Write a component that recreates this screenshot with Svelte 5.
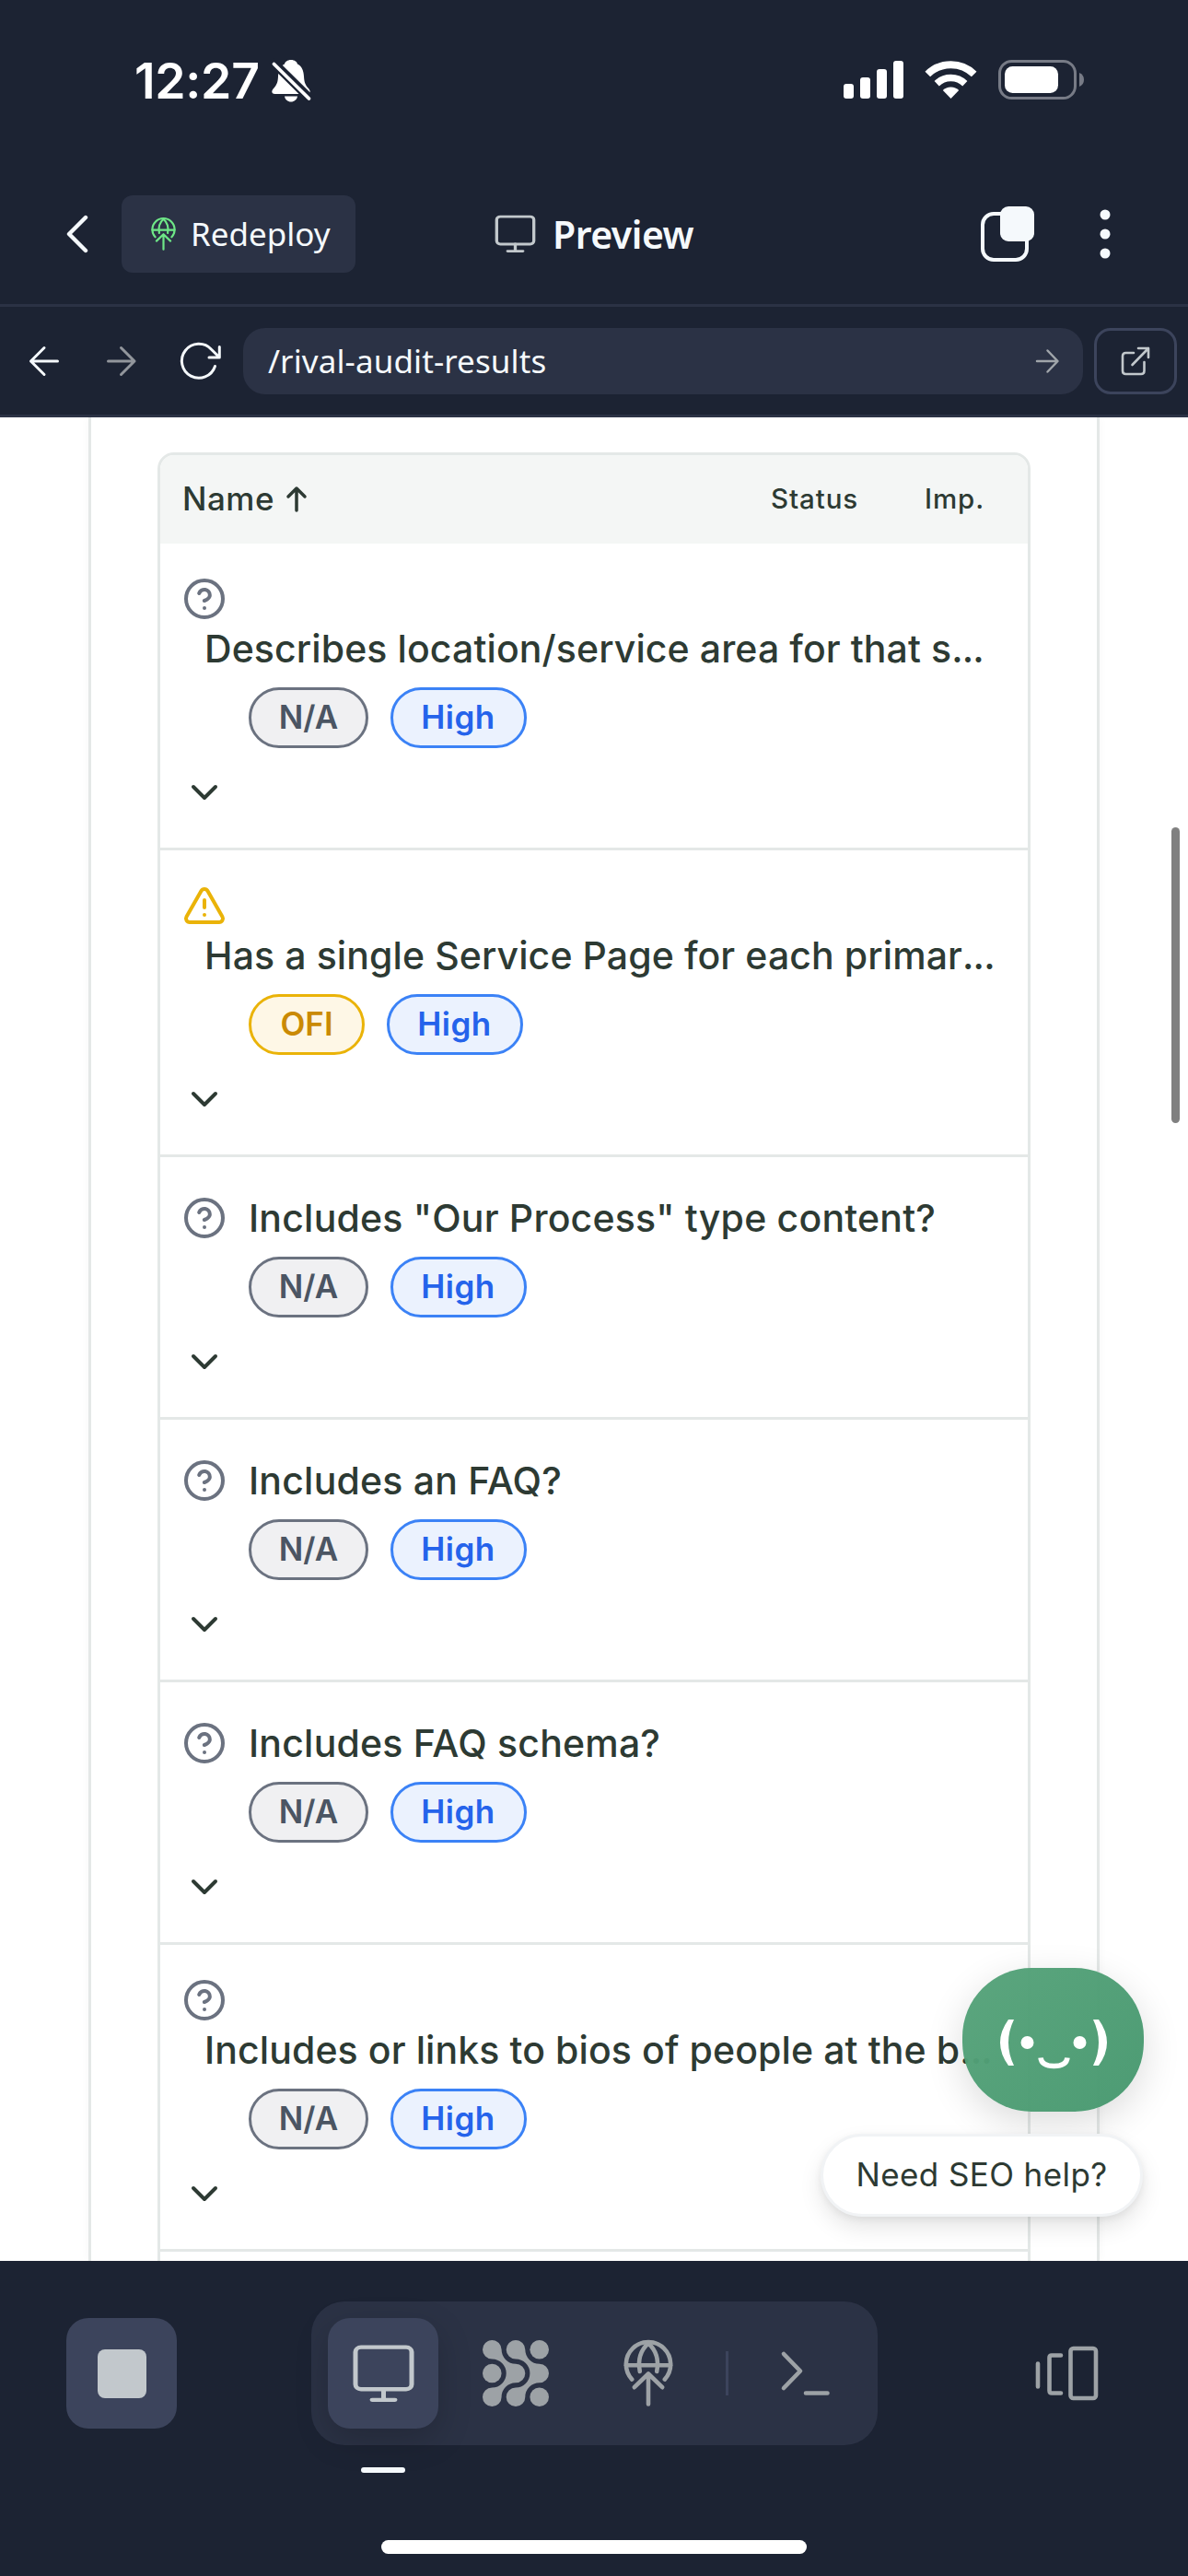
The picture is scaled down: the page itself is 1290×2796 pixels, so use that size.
<script>
  const rows = [
    { icon: 'help', tall: true, title: 'Describes location/service area for that s', cut: true, status: 'N/A' },
    { icon: 'warn', tall: true, title: 'Has a single Service Page for each primar', cut: true, status: 'OFI' },
    { icon: 'help', tall: false, title: 'Includes "Our Process" type content?', status: 'N/A' },
    { icon: 'help', tall: false, title: 'Includes an FAQ?', status: 'N/A' },
    { icon: 'help', tall: false, title: 'Includes FAQ schema?', status: 'N/A' },
    { icon: 'help', tall: true, title: 'Includes or links to bios of people at the b', cut: true, status: 'N/A' },
  ];
</script>

{#snippet globe()}
  <path d="M9.200 42.600A24.200 24.200 0 1 1 44.800 42.600" />
  <path d="M3 27.300H51" />
  <path d="M17.800 34C15.500 22 18.500 11 27 3.500C35.500 11 38.500 22 36.200 34" />
  <path d="M11.800 51.200L27 36.500L42.200 51.200M27 37V69.500" />
{/snippet}

{#snippet monitor()}
  <rect x="2" y="2" width="61" height="53" rx="6" />
  <path d="M32.500 55V68M20 68.500H45" />
{/snippet}

<div class="screen">
  <header class="status">
    <span class="time">12:27</span>
    <svg class="bell" width="43" height="46" viewBox="0 0 43 46">
      <path fill="#fff" d="M21 0c-4 0-6.500 2.200-7 4.500C9 7 7.300 12 7 18c-.2 6-1.500 9-4.500 12.500C-1 34 0 37 3.500 37H38.500C42 37 43 34 39.500 30.500 36.500 27 35.300 24 35 18c-.300-6-2-11-7-13.500C27.500 2.200 25 0 21 0zM14 39.500c.500 3.500 3.500 6 7 6s6.500-2.500 7-6z" />
      <path d="M2.500 3.500L41 41.500" stroke="#1c2333" stroke-width="9.500" />
      <path d="M2.500 4.500L40.500 42" stroke="#fff" stroke-width="3.800" stroke-linecap="round" />
    </svg>
    <svg class="signals" width="262" height="44" viewBox="0 0 262 44">
      <g fill="#fff">
        <rect x="0" y="26" width="11" height="16" rx="3" />
        <rect x="18" y="19" width="11" height="23" rx="3" />
        <rect x="36" y="10" width="11" height="32" rx="3" />
        <rect x="54" y="1" width="11" height="41" rx="3" />
        <path d="M116.500 29.500c-3.500 0-6.500 1.300-8.700 3.500l8.700 9 8.700-9c-2.200-2.200-5.200-3.500-8.700-3.500z" />
      </g>
      <path d="M91.300 15.500a36 36 0 0 1 50.400 0" fill="none" stroke="#fff" stroke-width="8" />
      <path d="M101.200 25.700a22 22 0 0 1 30.600 0" fill="none" stroke="#fff" stroke-width="7.500" />
      <rect x="169.500" y="1.500" width="82" height="40" rx="13" fill="none" stroke="#777b86" stroke-width="3" />
      <rect x="175" y="7" width="58" height="29" rx="8.500" fill="#fff" />
      <path d="M256 14q5 2 5 7.500t-5 7.500z" fill="#777b86" />
    </svg>
  </header>

  <div class="toolbar">
    <svg class="back" width="24" height="42" viewBox="0 0 24 42"><path d="M21 3L3 21L21 39" /></svg>
    <button class="redeploy">
      <svg class="green" width="27" height="36" viewBox="0 0 54 72">{@render globe()}</svg>
      <span>Redeploy</span>
    </button>
    <div class="title">
      <svg class="mon" width="43" height="40" viewBox="0 0 65 71" preserveAspectRatio="none">{@render monitor()}</svg>
      <span>Preview</span>
    </div>
    <svg class="copy" width="60" height="60" viewBox="0 0 60 60">
      <rect x="2" y="8" width="48" height="50" rx="12" fill="none" stroke="#f5f9fc" stroke-width="4" />
      <rect x="21" y="0" width="37" height="38" rx="9" fill="#f5f9fc" />
    </svg>
    <svg class="dots" width="12" height="54" viewBox="0 0 12 54" fill="#f5f9fc">
      <circle cx="6" cy="6" r="5.500" /><circle cx="6" cy="27" r="5.500" /><circle cx="6" cy="48" r="5.500" />
    </svg>
  </div>

  <nav class="address">
    <svg class="nb" width="32" height="32" viewBox="0 0 32 32"><path d="M16 1.500L1.500 16L16 30.500M1.500 16H30.500" /></svg>
    <svg class="nf" width="32" height="32" viewBox="0 0 32 32"><path d="M15.500 1.500L30 16L15.500 30.500M30 16H1.500" /></svg>
    <svg class="nr" width="46" height="42" viewBox="0 0 46 42"><path d="M37.500 26.500A18.500 18.500 0 1 1 33.500 8.200L42.300 17M42.300 5.500V17H31" /></svg>
    <div class="url">
      <span>/rival-audit-results</span>
      <svg width="25" height="26" viewBox="0 0 25 26"><path d="M12.500 1.500L23.500 13L12.500 24.500M23 13H1" /></svg>
    </div>
    <button class="open">
      <svg width="32" height="32" viewBox="0 0 32 32"><path d="M14 7H5.500Q2 7 2 10.500V26.500Q2 30 5.500 30H22Q25.500 30 25.500 26.500V17M19 2H30V12M30 2L12.500 20" /></svg>
    </button>
  </nav>

  <main>
    <section class="card">
      <div class="table">
        <div class="thead">
          <span class="name">Name</span>
          <svg width="22" height="27" viewBox="0 0 22 27"><path d="M11 26V2.500M2 11L11 2L20 11" /></svg>
          <span class="th st">Status</span>
          <span class="th imp">Imp.</span>
        </div>
        {#each rows as row}
          <article class="row">
            <div class="head" class:tall={row.tall}>
              {#if row.icon === 'help'}
                <svg class="ico help" viewBox="0 0 24 24"><circle cx="12" cy="12" r="10" /><path d="M9.090 9a3 3 0 0 1 5.830 1c0 2-3 3-3 3M12 17h.01" /></svg>
              {:else}
                <svg class="ico warn" viewBox="0 0 24 24"><path d="m21.730 18-8-14a2 2 0 0 0-3.480 0l-8 14A2 2 0 0 0 4 21h16a2 2 0 0 0 1.730-3M12 9v4M12 17h.01" /></svg>
              {/if}
              <h3>{row.title}{#if row.cut}<span class="cut">...</span>{/if}</h3>
            </div>
            <div class="pills">
              <span class="pill" class:ofi={row.status === 'OFI'}>{row.status}</span>
              <span class="pill high">High</span>
            </div>
            <svg class="ico chev" viewBox="0 0 24 24"><path d="m6 9 6 6 6-6" /></svg>
          </article>
        {/each}
      </div>
    </section>
    <div class="scrollbar"></div>
    <div class="chat">
      <svg width="118" height="54" viewBox="0 0 118 54">
        <g fill="#fff">
          <path d="M10 0H16Q4 25 16 50H10Q-8 25 10 0z" />
          <path d="M108 0H102Q114 25 102 50H108Q126 25 108 0z" />
          <circle cx="30.500" cy="25" r="7" /><circle cx="87.500" cy="25" r="7" />
        </g>
        <path class="smile" d="M45 41.500Q46 50.500 59.500 50.500T74 41.500" fill="none" stroke="#fff" stroke-width="5.500" />
      </svg>
    </div>
    <div class="helpbox">Need SEO help?</div>
  </main>

  <footer>
    <button class="stop"><i></i></button>
    <div class="group">
      <div class="tab active"><svg class="mon" width="65" height="61" viewBox="0 0 65 71" preserveAspectRatio="none">{@render monitor()}</svg></div>
      <div class="tab">
        <svg width="72" height="72" viewBox="0 0 72 72" fill="#9da2a6">
          <circle cx="10.300" cy="36" r="10.300" /><circle cx="61.700" cy="10.300" r="10.300" /><circle cx="61.700" cy="61.700" r="10.300" />
          {#each [0, 25.7] as dx}
            <path transform="translate({dx} 0)" d="M10.300 20.600A10.300 10.300 0 1 1 20.600 10.300A15.400 15.400 0 0 0 36 25.700A10.300 10.300 0 0 1 36 46.300A15.400 15.400 0 0 0 20.600 61.700A10.300 10.300 0 1 1 10.300 51.400A15.400 15.400 0 0 0 25.700 36A15.400 15.400 0 0 0 10.300 20.600z" />
          {/each}
        </svg>
      </div>
      <div class="tab"><svg class="gray" width="54" height="72" viewBox="0 0 54 72">{@render globe()}</svg></div>
      <div class="sep"></div>
      <div class="tab"><svg class="gray" width="54" height="48" viewBox="0 0 54 48"><path d="M3 3L21 21.500L3 40M27 45.500H50.500" /></svg></div>
    </div>
    <svg class="gray panels" width="70" height="60" viewBox="0 0 70 60">
      <path d="M3 19.500V44.500M28 10.500H18Q15.500 10.500 15.500 13V48.500Q15.500 51.500 18 51.500H28" /><rect x="38.500" y="3" width="27.500" height="54" rx="3" />
    </svg>
    <div class="underline"></div>
    <div class="home"></div>
  </footer>
</div>

<style>
  :global(body) { background: #1c2333; }
  * { box-sizing: border-box; }
  .screen { width: 1290px; height: 2796px; overflow: hidden; display: flex; flex-direction: column; background: #1c2333; font-family: Inter, "Liberation Sans", sans-serif; }
  svg { display: block; flex: none; overflow: visible; }
  svg path, svg rect { stroke-linecap: round; stroke-linejoin: round; }
  .signals path, path.smile { stroke-linecap: butt; }
  button { border: 0; padding: 0; margin: 0; font: inherit; color: inherit; }
  .status { height: 177px; flex: none; display: flex; align-items: flex-start; padding: 65px 0 0 146px; color: #fff; }
  .time { width: 149px; font-size: 53.500px; line-height: 46px; font-weight: 600; white-space: nowrap; letter-spacing: -.3px; }
  .signals { margin-left: 578px; }
  .toolbar { height: 156px; flex: none; border-bottom: 3px solid #2b3245; display: flex; align-items: center; padding-left: 72px; color: #f5f9fc; }
  .back path { fill: none; stroke: #f5f9fc; stroke-width: 4.400; }
  .redeploy { margin-left: 36px; width: 254px; height: 84px; border-radius: 12px; background: #2b3245; display: flex; align-items: center; padding-left: 32px; font-family: "Noto Sans", sans-serif; font-size: 35px; white-space: nowrap; }
  .redeploy span { margin-left: 16px; }
  .green path { fill: none; stroke: #6ee787; stroke-width: 4.400; }
  .title { margin-left: 152px; width: 527px; display: flex; align-items: center; font-family: "Noto Sans", sans-serif; font-weight: 600; font-size: 41px; letter-spacing: -.5px; }
  .title span { margin-left: 19px; }
  .mon rect, .mon path { fill: none; stroke: #c2c8cc; stroke-width: 5; }
  .dots { margin-left: 69px; }
  .address { height: 120px; flex: none; border-bottom: 3px solid #2b3245; display: flex; align-items: center; padding-left: 32px; color: #f5f9fc; }
  .address path { fill: none; stroke: #f5f9fc; stroke-width: 3; }
  .nf { margin-left: 52px; }
  .address .nf path { stroke: #92969c; }
  .nr { margin-left: 48px; }
  .url { margin-left: 22px; width: 912px; height: 72px; border-radius: 24px; background: #2b3245; display: flex; align-items: center; justify-content: space-between; padding: 0 26px 0 27px; font-family: "Noto Sans", sans-serif; font-size: 35px; letter-spacing: .1px; }
  .address .url path { stroke: #a0a5aa; stroke-width: 2.500; }
  .open { margin-left: 12px; width: 90px; height: 72px; border: 3px solid #3c445c; border-radius: 18px; background: transparent; display: flex; align-items: center; justify-content: center; }
  .address .open path { stroke: #c2c8cc; stroke-width: 2.600; }

  main { position: relative; height: 2001px; flex: none; overflow: hidden; background: #fff; }
  .card { margin-left: 96px; width: 1098px; height: 2001px; border: 3px solid #e4e8e7; border-width: 0 3px; padding: 38px 72px 0; box-shadow: 0 0 9px rgba(0, 0, 0, .04); }
  .table { width: 948px; height: 2100px; border: 3px solid #e4e8e7; border-radius: 18px; overflow: hidden; color: #2d3a33; }
  .thead { height: 96px; background: #f4f6f5; display: flex; align-items: center; padding: 0 0 2px 24px; font-weight: 500; white-space: nowrap; }
  .name { font-size: 35px; width: 113px; letter-spacing: .5px; }
  .thead svg path { fill: none; stroke: #2d3a33; stroke-width: 3.500; }
  .th { font-size: 29.500px; letter-spacing: .9px; }
  .st { margin-left: 504px; width: 167px; }
  .row { border-bottom: 3px solid #e4e8e7; padding: 36px 24px; display: flex; flex-direction: column; }
  .head { display: flex; align-items: center; height: 60px; gap: 24px; }
  .head.tall { display: block; height: 108px; }
  h3 { margin: 0; font-size: 41px; line-height: 60px; font-weight: 500; white-space: nowrap; letter-spacing: .2px; }
  .tall h3 { margin-left: 24px; letter-spacing: .1px; }
  .cut { letter-spacing: -.9px; }
  .ico { width: 48px; height: 48px; fill: none; stroke-width: 2; }
  .help { stroke: #6b7280; }
  .warn { stroke: #eab308; }
  .chev { stroke: #2d3a33; }
  .pills { display: flex; gap: 24px; margin: 12px 0 24px 72px; }
  .pill { height: 66px; border: 3px solid #6b7280; border-radius: 33px; background: #f0f0f2; color: #4b5563; font-size: 35px; font-weight: 600; line-height: 58px; width: 130px; text-align: center; }
  .ofi { width: 126px; border-color: #eab308; background: #fef7e6; color: #ca8a04; }
  .high { width: 148px; border-color: #3b82f6; background: #ebf2fe; color: #2563eb; letter-spacing: .5px; padding-right: 1px; }
  .scrollbar { position: absolute; left: 1272px; top: 445px; width: 9px; height: 321px; border-radius: 5px; background: #808080; }
  .chat { position: absolute; left: 1045px; top: 1683px; width: 197px; height: 156px; border-radius: 75px; background: linear-gradient(135deg, rgba(86, 163, 122, .97), rgba(71, 152, 111, .97)); box-shadow: 0 12px 42px rgba(0, 0, 0, .14); display: flex; align-items: center; justify-content: center; padding-top: 10px; }
  .helpbox { position: absolute; left: 891px; top: 1863px; width: 350px; height: 90px; border: 3px solid #f1f3f5; border-radius: 45px; background: #fff; box-shadow: 0 12px 24px rgba(0, 0, 0, .1), 0 3px 9px rgba(0, 0, 0, .06); text-align: center; color: #2d3a33; font-size: 35px; line-height: 82px; white-space: nowrap; letter-spacing: .4px; }

  footer { position: relative; flex: 1; display: flex; align-items: flex-start; padding: 44px 0 0 72px; }
  .stop { margin-top: 18px; width: 120px; height: 120px; border-radius: 24px; background: #3c445c; display: flex; align-items: center; justify-content: center; }
  .stop i { width: 53px; height: 53px; border-radius: 8px; background: #c2c8cc; }
  .group { margin-left: 146px; width: 615px; height: 156px; border-radius: 36px; background: #2b3245; display: flex; align-items: center; padding-left: 18px; gap: 24px; }
  .tab { width: 120px; height: 120px; border-radius: 24px; display: flex; align-items: center; justify-content: center; }
  .active { background: #3c445c; box-shadow: 0 12px 36px rgba(0, 0, 0, .18); }
  .gray path, .gray rect { fill: none; stroke: #9da2a6; stroke-width: 4.600; }
  .sep { width: 3px; height: 48px; background: #3c445c; }
  .panels { margin: 48px 0 0 171px; }
  .underline { position: absolute; left: 392px; top: 224px; width: 48px; height: 6px; border-radius: 3px; background: #f5f9fc; }
  .home { position: absolute; left: 414px; top: 303px; width: 462px; height: 15px; border-radius: 8px; background: #fff; }
</style>
